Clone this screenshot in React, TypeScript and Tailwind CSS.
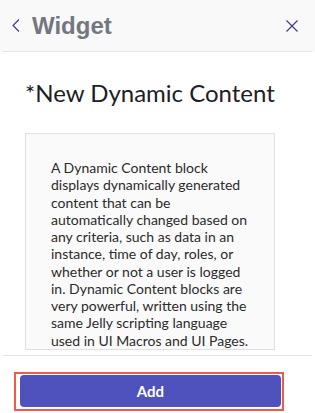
const body =
    'A Dynamic Content block displays dynamically generated content that can be automatically changed based on any criteria, such as data in an instance, time of day, roles, or whether or not a user is logged in. Dynamic Content blocks are very powerful, written using the same Jelly scripting language used in UI Macros and UI Pages.';

export default function App() {
    return (
        <div className="w-[315px] h-[413px] bg-white flex flex-col overflow-hidden font-['Lato','Liberation_Sans',sans-serif]">
            {/* Header */}
            <div className="bg-[#f9f9f9]">
                <div className="h-[52px] mx-[3px] border-b border-[#e4e4e6] flex items-center justify-between pl-[9px] pr-[14px]">
                    <div className="flex items-center gap-[12px]">
                        <svg width="8" height="13" viewBox="0 0 8 13" className="text-[#3d3f94]">
                            <polyline points="7,0.5 1,6.5 7,12.5" fill="none" stroke="currentColor" strokeWidth="1.2" />
                        </svg>
                        <span className="font-['Liberation_Sans',sans-serif] font-bold text-[24px] text-[#73777f] leading-none pt-[1px]">
                            Widget
                        </span>
                    </div>
                    <svg width="12" height="12" viewBox="0 0 12 12" className="text-[#3d3f94] mt-[1px]">
                        <path d="M0.5 0.5 L11.5 11.5 M11.5 0.5 L0.5 11.5" fill="none" stroke="currentColor" strokeWidth="1.2" />
                    </svg>
                </div>
            </div>

            {/* Content */}
            <div className="flex-1 px-[25px] pt-[26px] overflow-hidden">
                <h1 className="text-[24px] leading-[30px] text-[#1c2025] font-normal">*New Dynamic Content</h1>
                <div className="mt-[25px] w-[250px] bg-[#fafafa] border border-[#e1e1e3] px-[25px] pt-[25px] text-[14px] leading-[17.27px] text-[#2b2b2b]">
                    {body}
                </div>
            </div>

            {/* Footer */}
            <div className="mx-[3px] border-t border-[#e4e4e6] pt-[16px] pb-[2px] pl-[11px]">
                <div className="w-[270px] h-[39px] border-2 border-[#f2594b] pl-[4px] pt-[1px] pr-px pb-[2px]">
                    <button className="w-full h-full rounded-[4px] bg-[#4f52bd] text-white font-bold text-[15px]">
                        Add
                    </button>
                </div>
            </div>
        </div>
    );
}
